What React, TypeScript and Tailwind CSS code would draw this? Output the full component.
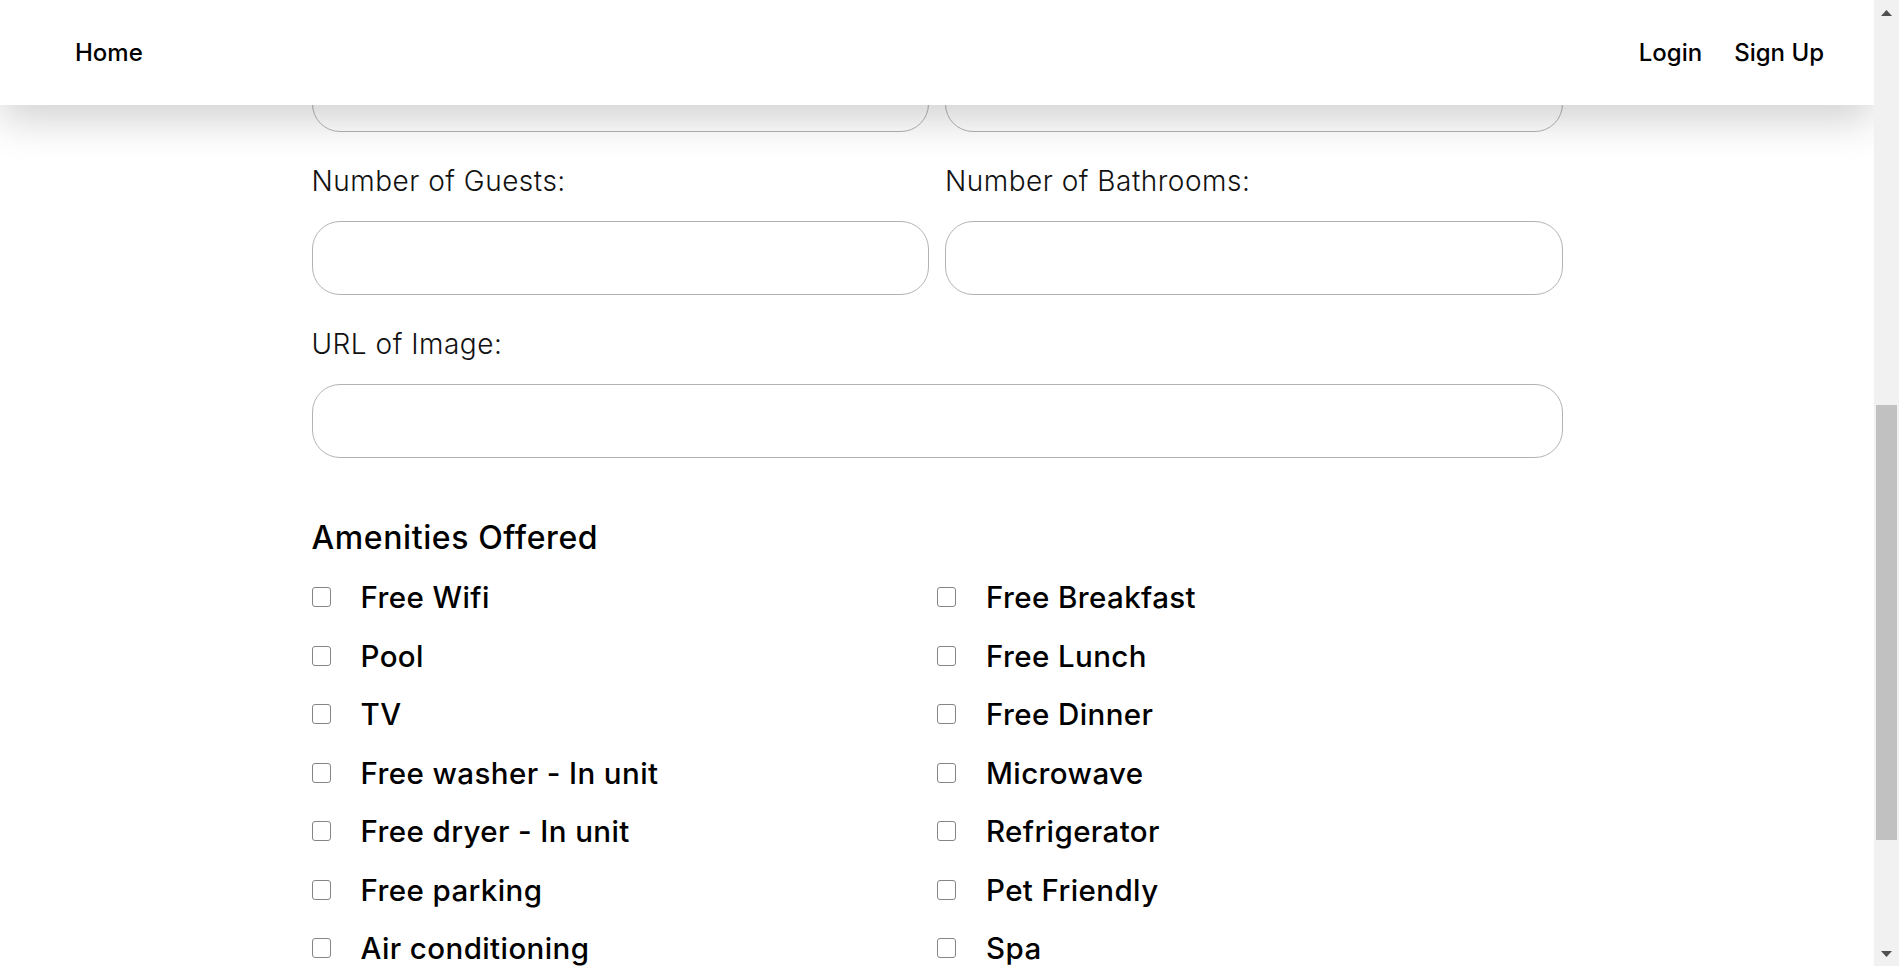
import React from 'react';

const amenities: [string, string][] = [
  ['Free Wifi', 'Free Breakfast'],
  ['Pool', 'Free Lunch'],
  ['TV', 'Free Dinner'],
  ['Free washer - In unit', 'Microwave'],
  ['Free dryer - In unit', 'Refrigerator'],
  ['Free parking', 'Pet Friendly'],
  ['Air conditioning', 'Spa'],
];

function Field({ label, wide }: { label: string; wide?: boolean }) {
  return (
    <div className={wide ? 'col-span-2' : ''}>
      <label className="block text-[28px] leading-[34px] font-light tracking-[0.5px] text-[#111]">{label}</label>
      <input
        type="text"
        className="mt-[23px] block w-full h-[74px] rounded-[28px] border border-[#b3b3b3] bg-white px-6 text-[24px] outline-none"
      />
    </div>
  );
}

function Amenity({ name }: { name: string }) {
  return (
    <label className="flex items-center h-[58.5px]">
      <input
        type="checkbox"
        className="appearance-none w-[19px] h-[20px] rounded-[3px] border-[1.5px] border-[#858585] bg-white shrink-0"
      />
      <span className="ml-[30px] text-[29.5px] leading-[58.5px] font-medium tracking-[0.4px] text-black">{name}</span>
    </label>
  );
}

function Scrollbar() {
  return (
    <div className="w-[25px] h-full bg-[#f1f1f1] flex flex-col shrink-0">
      <div className="h-[25px] flex items-center justify-center">
        <svg width="11" height="6" viewBox="0 0 11 6">
          <polygon points="0,6 5.5,0 11,6" fill="#505050" />
        </svg>
      </div>
      <div className="flex-1 px-[2px]">
        <div className="mt-[380px] h-[435px] bg-[#c1c1c1]" />
      </div>
      <div className="h-[25px] flex items-center justify-center">
        <svg width="11" height="6" viewBox="0 0 11 6">
          <polygon points="0,0 11,0 5.5,6" fill="#505050" />
        </svg>
      </div>
    </div>
  );
}

export default function App() {
  return (
    <div className="h-screen w-full flex overflow-hidden bg-white" style={{ fontFamily: 'Inter, "Noto Sans", sans-serif' }}>
      <div className="relative flex-1 h-full overflow-hidden">
        {/* fixed navbar */}
        <nav className="absolute top-0 left-0 right-0 z-10 h-[105px] bg-white flex items-center justify-between pl-[75px] pr-[50px] shadow-[0_15px_40px_rgba(0,0,0,0.18)]">
          <a className="text-[24px] font-medium text-black">Home</a>
          <div className="flex items-center gap-8">
            <a className="text-[24px] font-medium text-black">Login</a>
            <a className="text-[24px] font-medium text-black">Sign Up</a>
          </div>
        </nav>

        <div className="w-[1251px] mx-auto pt-px">
          <div className="grid grid-cols-2 gap-x-4 gap-y-8">
            <Field label="Number of Bedrooms:" />
            <Field label="Price per Night:" />
            <Field label="Number of Guests:" />
            <Field label="Number of Bathrooms:" />
            <Field label="URL of Image:" wide />
          </div>

          <h2 className="mt-[60px] text-[32px] leading-[40px] font-medium tracking-[0.6px] text-black">Amenities Offered</h2>

          <div className="mt-[10px] grid grid-cols-2">
            {amenities.flat().map((a) => (
              <Amenity key={a} name={a} />
            ))}
          </div>
        </div>
      </div>
      <Scrollbar />
    </div>
  );
}
